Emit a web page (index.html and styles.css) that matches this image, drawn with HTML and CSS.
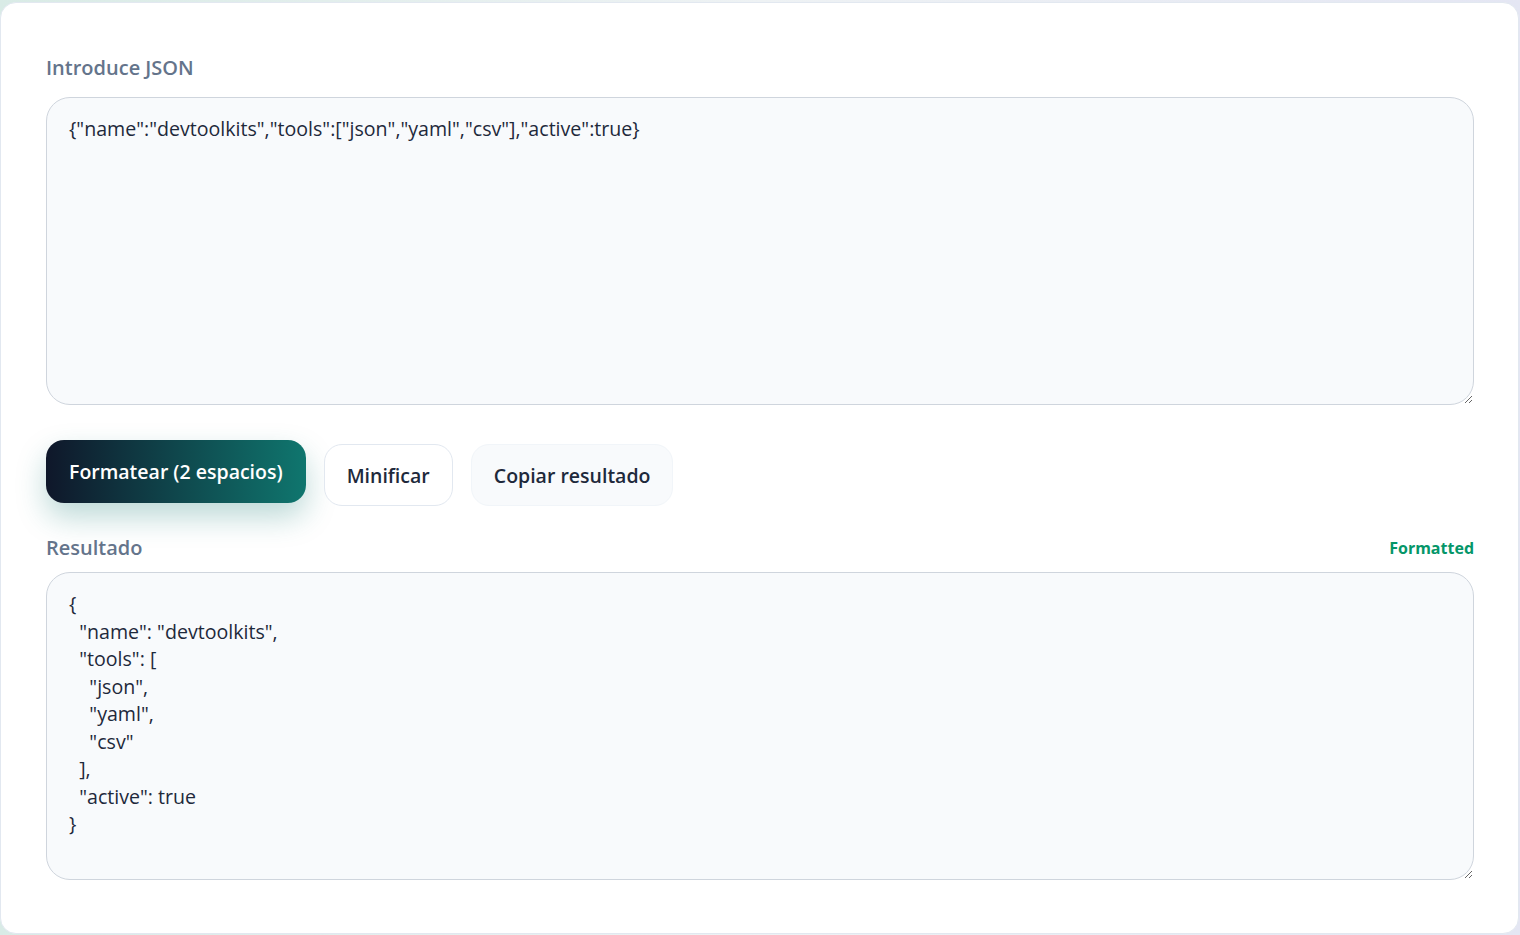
FILE: index.html
```html
<!DOCTYPE html>
<html lang="es">
<head>
    <meta charset="utf-8">
    <title>Formateador JSON</title>
    <link rel="stylesheet" href="styles.css">
</head>
<body>
    <div class="card">
        <label class="field-label" for="jsonInput">Introduce JSON</label>
        <textarea id="jsonInput" class="code-box" spellcheck="false">{"name":"devtoolkits","tools":["json","yaml","csv"],"active":true}</textarea>

        <div class="actions">
            <button class="btn btn-primary">Formatear (2 espacios)</button>
            <button class="btn btn-outline">Minificar</button>
            <button class="btn btn-soft">Copiar resultado</button>
        </div>

        <div class="result-header">
            <label class="field-label" for="jsonOutput">Resultado</label>
            <span class="status">Formatted</span>
        </div>
        <textarea id="jsonOutput" class="code-box" spellcheck="false" readonly>{
  "name": "devtoolkits",
  "tools": [
    "json",
    "yaml",
    "csv"
  ],
  "active": true
}</textarea>
    </div>
</body>
</html>
```

FILE: styles.css
```css
html, body {
    height: 100%;
}

body {
    margin: 0;
    padding: 2px 1px 1px 0;
    box-sizing: border-box;
    background: linear-gradient(90deg, #d9ebe6 0%, #eef2f4 50%, #e4e6f3 100%);
    font-family: "Open Sans", "Lato", Arial, sans-serif;
    color: #1e293b;
}

.card {
    height: 100%;
    box-sizing: border-box;
    background-color: #fff;
    border: 1px solid #e2e8f0;
    border-radius: 16px;
    padding: 51px 44px 0 45px;
    display: flex;
    flex-direction: column;
}

.field-label {
    display: block;
    font-size: 20px;
    line-height: 28px;
    font-weight: 600;
    color: #64748b;
}

.code-box {
    display: block;
    width: 100%;
    height: 308px;
    box-sizing: border-box;
    margin: 0;
    padding: 17px 22px;
    border: 1px solid #cfd5dd;
    border-radius: 24px;
    background-color: #f8fafc;
    font-family: inherit;
    font-size: 19.6px;
    line-height: 27.5px;
    color: #1e293b;
    outline: none;
}

.card > .field-label {
    margin-bottom: 15px;
}

.actions {
    display: flex;
    gap: 18px;
    align-items: flex-start;
    margin-top: 39px;
}

.btn {
    font-family: inherit;
    font-size: 19.5px;
    font-weight: 600;
    height: 62px;
    padding: 0 22px;
    border-radius: 18px;
    cursor: pointer;
    color: #1e293b;
}

.btn-primary {
    height: 63px;
    padding: 0 23px;
    margin-top: -4px;
    border: none;
    color: #fff;
    background: linear-gradient(90deg, #0f172a 0%, #0f766e 100%);
    box-shadow: 0 14px 30px rgba(15, 118, 110, 0.28);
}

.btn-outline {
    background-color: #fff;
    border: 1px solid #e2e8f0;
}

.btn-soft {
    background-color: #f8fafc;
    border: 1px solid #f1f5f9;
}

.result-header {
    display: flex;
    justify-content: space-between;
    align-items: center;
    margin-top: 28px;
    margin-bottom: 10px;
}

.status {
    font-size: 16px;
    font-weight: 700;
    color: #059669;
}
```
